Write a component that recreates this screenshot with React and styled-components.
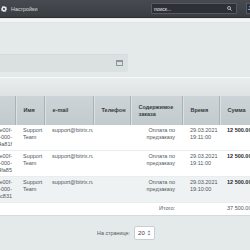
import React from 'react';
import styled, { createGlobalStyle } from 'styled-components';

const GlobalStyle = createGlobalStyle`
  html, body {
    margin: 0;
    padding: 0;
    overflow: hidden;
    background: #e4e9ea;
    font-family: "Liberation Sans", Arial, sans-serif;
  }
`;

const rows = [
  {
    guid: ['5c1e00f-', '0000-000-', '9b4a81f'],
    name: 'Support Team',
    email: 'support@bitrix.ru',
    time: ['29.03.2021', '19:11:00'],
    sum: '12 500.00',
  },
  {
    guid: ['5c1e00f-', '0000-000-', '9b4fa85'],
    name: 'Support Team',
    email: 'support@bitrix.ru',
    time: ['29.03.2021', '19:11:00'],
    sum: '12 500.00',
  },
  {
    guid: ['5c1e00f-', '0000-000-', '9b4c831'],
    name: 'Support Team',
    email: 'support@bitrix.ru',
    time: ['29.03.2021', '19:10:00'],
    sum: '12 500.00',
    muted: true,
  },
];

const columns = [
  { key: 'guid', title: '', width: 45 },
  { key: 'name', title: 'Имя', width: 29 },
  { key: 'email', title: 'e-mail', width: 49 },
  { key: 'phone', title: 'Телефон', width: 37 },
  { key: 'content', title: 'Содержимое заказа', width: 52 },
  { key: 'time', title: 'Время', width: 37 },
  { key: 'sum', title: 'Сумма', width: 50 },
];

const GearIcon = () => (
  <svg width="6" height="6" viewBox="0 0 12 12">
    <path
      fill="#e6e8ea"
      d="M5 0h2l.3 1.6 1.2.5L9.9 1.2l1.4 1.4-.9 1.4.5 1.2L12 5v2l-1.6.3-.5 1.2.9 1.4-1.4 1.4-1.4-.9-1.2.5L7 12H5l-.3-1.6-1.2-.5-1.4.9-1.4-1.4.9-1.4-.5-1.2L0 7V5l1.6-.3.5-1.2-.9-1.4 1.4-1.4 1.4.9 1.2-.5z"
    />
    <circle cx="6" cy="6" r="2.2" fill="#3f4348" />
  </svg>
);

const SearchIcon = () => (
  <svg width="5" height="5" viewBox="0 0 10 10">
    <circle cx="4" cy="4" r="3" fill="none" stroke="#c9ccd0" strokeWidth="1.6" />
    <path d="M6.3 6.3L9.2 9.2" stroke="#c9ccd0" strokeWidth="1.8" />
  </svg>
);

const WindowIcon = () => (
  <svg width="7" height="6" viewBox="0 0 7 6">
    <rect x="0.5" y="0.5" width="6" height="5" fill="none" stroke="#8d969b" />
    <rect x="0.5" y="0.5" width="6" height="1.5" fill="#8d969b" />
  </svg>
);

const SpinIcon = () => (
  <svg width="4" height="6" viewBox="0 0 4 6">
    <path d="M0.5 2.2L2 0.6 3.5 2.2z" fill="#7c858a" />
    <path d="M0.5 3.8L2 5.4 3.5 3.8z" fill="#7c858a" />
  </svg>
);

const App = () => (
  <>
    <GlobalStyle />
    <TopBar>
      <SettingsLink>
        <GearIcon />
        <span>Настройки</span>
      </SettingsLink>
      <Search>
        <span>поиск...</span>
        <SearchIcon />
      </Search>
      <UserButton>J</UserButton>
    </TopBar>
    <TopShine />
    <Content>
      <FilterBar>
        <WindowIcon />
      </FilterBar>
      <Grid>
        <GridToolbar />
        <Table>
          <colgroup>
            {columns.map((c) => (
              <col key={c.key} style={{ width: c.width }} />
            ))}
          </colgroup>
          <thead>
            <tr>
              {columns.map((c) => (
                <HeadCell key={c.key}>{c.title}</HeadCell>
              ))}
            </tr>
          </thead>
          <tbody>
            {rows.map((r, i) => (
              <Row key={i} $muted={r.muted}>
                <GuidCell>
                  {r.guid.map((g) => (
                    <Line key={g}>{g}</Line>
                  ))}
                </GuidCell>
                <Cell>{r.name}</Cell>
                <Cell $nowrap>{r.email}</Cell>
                <Cell />
                <Cell $right>
                  Оплата по
                  <br />
                  предзаказу
                </Cell>
                <Cell $nowrap>
                  {r.time[0]}
                  <br />
                  {r.time[1]}
                </Cell>
                <Cell $bold $nowrap>
                  {r.sum}
                </Cell>
              </Row>
            ))}
            <TotalRow>
              <Cell colSpan={5} $right>
                Итого:
              </Cell>
              <Cell />
              <Cell $nowrap>37 500.00</Cell>
            </TotalRow>
          </tbody>
        </Table>
        <Footer>
          <span>На странице:</span>
          <PageSize>
            20
            <SpinIcon />
          </PageSize>
        </Footer>
      </Grid>
    </Content>
  </>
);

const TopBar = styled.div`
  display: flex;
  align-items: center;
  height: 17px;
  padding-left: 1px;
  background: linear-gradient(#474b51, #3a3e43);
  border-bottom: 1px solid #2b2e32;
`;

const SettingsLink = styled.div`
  display: flex;
  align-items: center;
  gap: 4px;
  color: #d9dcdf;
  font-size: 5.4px;
`;

const Search = styled.div`
  display: flex;
  align-items: center;
  justify-content: space-between;
  box-sizing: border-box;
  width: 86px;
  height: 11px;
  margin-left: auto;
  margin-right: 9px;
  padding: 0 4px 0 2px;
  background: #2d3137;
  border: 1px solid #575b61;
  border-radius: 1px;
  color: #e4e6e8;
  font-size: 5px;
`;

const UserButton = styled.div`
  box-sizing: border-box;
  flex: none;
  width: 16px;
  height: 11px;
  margin-right: -12px;
  padding-left: 1px;
  background: #2d3137;
  border: 1px solid #575b61;
  color: #e4e6e8;
  font-size: 6px;
  line-height: 9px;
`;

const TopShine = styled.div`
  height: 3px;
  margin-top: 1px;
  background: #f3f5f5;
  border-bottom: 1px solid #dfe4e5;
`;

const Content = styled.div`
  padding-top: 31px;
`;

const FilterBar = styled.div`
  display: flex;
  align-items: center;
  justify-content: flex-end;
  box-sizing: border-box;
  width: 138px;
  height: 18px;
  margin-left: -10px;
  padding-right: 5px;
  background: #dbe0e1;
  border-radius: 2px;
  box-shadow: inset 0 1px 0 #d5dadb;
`;

const Grid = styled.div`
  margin-top: 5px;
`;

const GridToolbar = styled.div`
  height: 18px;
  background: linear-gradient(#e9eded, #dde2e3);
  border-top: 1px solid #f6f8f8;
`;

const Table = styled.table`
  table-layout: fixed;
  width: 299px;
  margin-left: -30px;
  border-collapse: collapse;
  font-size: 5.5px;
  color: #50575c;
`;

const HeadCell = styled.th`
  height: 29px;
  padding: 0 2px 0 8px;
  background: linear-gradient(#cdd4d7, #c1cacd);
  border-right: 1px solid #a9b3b7;
  box-shadow: inset 1px 0 0 #dbe1e3;
  color: #353b40;
  font-weight: bold;
  line-height: 7px;
  text-align: left;
  vertical-align: middle;
`;

const Row = styled.tr`
  background: ${(p) => (p.$muted ? '#eef2f3' : '#ffffff')};
  border-bottom: 1px solid #e9edee;
`;

const TotalRow = styled.tr`
  background: #ffffff;
  height: 12px;
`;

const Cell = styled.td`
  padding: 2px ${(p) => (p.$right ? '7px' : '1px')} 2px 8px;
  line-height: 7px;
  vertical-align: top;
  text-align: ${(p) => (p.$right ? 'right' : 'left')};
  font-weight: ${(p) => (p.$bold ? 'bold' : 'normal')};
  color: ${(p) => (p.$bold ? '#23282c' : 'inherit')};
  white-space: ${(p) => (p.$nowrap ? 'nowrap' : 'normal')};
  overflow: hidden;
`;

const GuidCell = styled(Cell)`
  padding-left: 4px;
  padding-right: 3px;
  white-space: nowrap;
`;

const Line = styled.div`
  text-align: right;
`;

const Footer = styled.div`
  display: flex;
  align-items: center;
  gap: 4px;
  height: 35px;
  padding-left: 97px;
  border-top: 1px solid #d5dbdd;
  color: #50575c;
  font-size: 5.4px;
`;

const PageSize = styled.div`
  display: flex;
  align-items: center;
  justify-content: space-between;
  box-sizing: border-box;
  width: 21px;
  height: 14px;
  padding: 0 3px 0 3px;
  background: #ffffff;
  border: 1px solid #c8cfd2;
  border-radius: 2px;
  color: #333a3f;
  font-size: 6px;
`;

export default App;
